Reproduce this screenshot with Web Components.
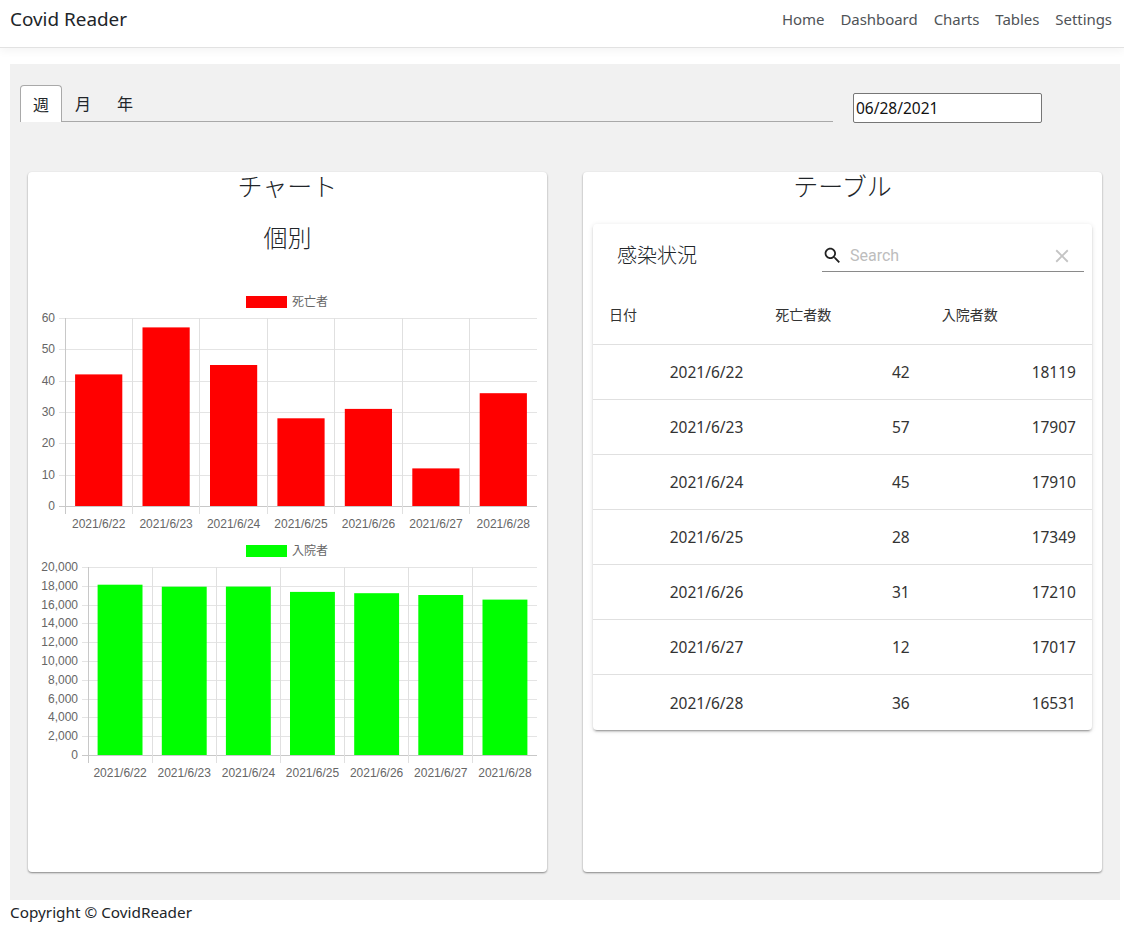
<!DOCTYPE html>
<html lang="ja">
<head>
<meta charset="utf-8">
<title>Covid Reader</title>
<style>
  html, body { margin: 0; padding: 0; background: #fff; }
  body {
    font-family: "Noto Sans", "Noto Sans CJK JP", sans-serif;
    color: #212529;
  }
</style>
</head>
<body>
<app-nav brand="Covid Reader"></app-nav>
<app-main>
  <tab-bar slot="tabs"></tab-bar>
  <date-field slot="date" value="06/28/2021"></date-field>
  <title-card slot="left" heading="チャート">
    <h-sub>個別</h-sub>
    <bar-chart label="死亡者" color="#ff0000" max="60" step="10" left="27" data="42,57,45,28,31,12,36"></bar-chart>
    <bar-chart label="入院者" color="#00ff00" max="20000" step="2000" left="50" data="18119,17907,17910,17349,17210,17017,16531"></bar-chart>
  </title-card>
  <title-card slot="right" heading="テーブル">
    <covid-table></covid-table>
  </title-card>
</app-main>
<app-footer>Copyright © CovidReader</app-footer>

<script>
const DAYS = ['2021/6/22', '2021/6/23', '2021/6/24', '2021/6/25', '2021/6/26', '2021/6/27', '2021/6/28'];
const DEATHS = [42, 57, 45, 28, 31, 12, 36];
const HOSPITAL = [18119, 17907, 17910, 17349, 17210, 17017, 16531];
const SANS = '"Noto Sans", "Noto Sans CJK JP", sans-serif';

class AppNav extends HTMLElement {
  constructor() {
    super();
    this.attachShadow({ mode: 'open' });
  }
  connectedCallback() {
    this.shadowRoot.innerHTML = `
    <style>
      :host {
        display: flex;
        align-items: center;
        justify-content: space-between;
        height: 38px;
        padding: 0 12px 9px 10px;
        background: #fff;
        border-bottom: 1px solid #e2e2e2;
        box-shadow: 0 4px 8px rgba(0, 0, 0, 0.04);
        font-family: ${SANS};
      }
      .brand { font-size: 18.9px; color: #212529; }
      nav { display: flex; gap: 16px; font-size: 15px; letter-spacing: -0.05px; color: #4f5357; }
    </style>
    <span class="brand">${this.getAttribute('brand')}</span>
    <nav>
      <span>Home</span><span>Dashboard</span><span>Charts</span><span>Tables</span><span>Settings</span>
    </nav>`;
  }
}

class AppMain extends HTMLElement {
  constructor() {
    super();
    this.attachShadow({ mode: 'open' });
    this.shadowRoot.innerHTML = `
    <style>
      :host {
        display: block;
        margin: 16px 4px 0 10px;
        padding: 21px 0 28px;
        background: #f1f1f1;
      }
      .toolbar {
        display: flex;
        padding-left: 10px;
        height: 37px;
      }
      .tabs { width: 813px; }
      .date { margin: 8px 0 0 20px; }
      .cards {
        display: grid;
        grid-template-columns: 519px 519px;
        gap: 36px;
        margin: 50px 18px 0;
      }
    </style>
    <div class="toolbar">
      <div class="tabs"><slot name="tabs"></slot></div>
      <div class="date"><slot name="date"></slot></div>
    </div>
    <div class="cards">
      <slot name="left"></slot>
      <slot name="right"></slot>
    </div>`;
  }
}

class TabBar extends HTMLElement {
  constructor() {
    super();
    this.attachShadow({ mode: 'open' });
    this.shadowRoot.innerHTML = `
    <style>
      :host {
        display: flex;
        height: 37px;
        box-sizing: border-box;
        border-bottom: 1px solid #a9a9a9;
        font-size: 16px;
        color: #212529;
      }
      span {
        box-sizing: border-box;
        width: 42px;
        height: 37px;
        line-height: 36px;
        text-align: center;
        font-family: "Noto Sans CJK JP", sans-serif;
      }
      .active {
        background: #fff;
        border: 1px solid #a9a9a9;
        border-bottom: 0;
        border-radius: 4px 4px 0 0;
      }
    </style>
    <span class="active">週</span><span>月</span><span>年</span>`;
  }
}

class DateField extends HTMLElement {
  constructor() {
    super();
    this.attachShadow({ mode: 'open' });
  }
  connectedCallback() {
    this.shadowRoot.innerHTML = `
    <style>
      :host {
        display: block;
        box-sizing: border-box;
        width: 189px;
        height: 30px;
        padding-left: 2px;
        line-height: 29px;
        background: #fff;
        border: 1px solid #767676;
        border-radius: 2px;
        font-size: 15.5px;
        color: #111;
      }
    </style>
    ${this.getAttribute('value')}`;
  }
}

class TitleCard extends HTMLElement {
  constructor() {
    super();
    this.attachShadow({ mode: 'open' });
  }
  connectedCallback() {
    this.shadowRoot.innerHTML = `
    <style>
      :host {
        display: flex;
        flex-direction: column;
        box-sizing: border-box;
        height: 700px;
        padding: 0 10px;
        background: #fff;
        border-radius: 4px;
        box-shadow: 0 1px 2px rgba(0, 0, 0, 0.45);
      }
      h2 {
        margin: 0;
        height: 30px;
        line-height: 26px;
        font-size: 25px;
        font-weight: 300;
        text-align: center;
        font-family: "Noto Sans CJK JP", sans-serif;
        color: #212529;
      }
    </style>
    <h2>${this.getAttribute('heading')}</h2>
    <slot></slot>`;
  }
}

class HSub extends HTMLElement {
  constructor() {
    super();
    this.attachShadow({ mode: 'open' });
    this.shadowRoot.innerHTML = `
    <style>
      :host {
        display: block;
        margin-top: 19px;
        height: 69px;
        line-height: 32px;
        font-size: 24px;
        font-weight: 300;
        text-align: center;
        font-family: "Noto Sans CJK JP", sans-serif;
        color: #212529;
      }
    </style>
    <slot></slot>`;
  }
}

// draws one chart.js style bar chart, the plot is 188px high and ends at the card padding
class BarChart extends HTMLElement {
  constructor() {
    super();
    this.attachShadow({ mode: 'open' });
  }
  connectedCallback() {
    const data = this.getAttribute('data').split(',').map(Number);
    const max = Number(this.getAttribute('max'));
    const step = Number(this.getAttribute('step'));
    const left = Number(this.getAttribute('left'));
    const color = this.getAttribute('color');
    const right = 499, top = 28, bottom = 216;
    const colW = (right - left) / data.length;
    const barW = colW * 0.7;
    let grid = '', bars = '', labels = '';

    for (let v = 0; v <= max; v += step) {
      const y = Math.round(bottom - (v / max) * (bottom - top)) + 0.5;
      const isBase = v === 0;
      grid += `<line x1="${left - 6}" x2="${right}" y1="${y}" y2="${y}" stroke="${isBase ? '#c8c8c8' : '#e4e4e4'}"/>`;
      labels += `<text x="${left - 10}" y="${y + 3.5}" text-anchor="end">${v.toLocaleString('en-US')}</text>`;
    }
    // no line on the right edge of the plot
    for (let i = 0; i < data.length; i++) {
      const x = Math.floor(left + i * colW) + 0.5;
      grid += `<line x1="${x}" x2="${x}" y1="${top}" y2="${bottom + 8}" stroke="${i === 0 ? '#c8c8c8' : '#e0e0e0'}"/>`;
    }
    data.forEach((v, i) => {
      const x = left + i * colW + (colW - barW) / 2;
      const h = (v / max) * (bottom - top);
      bars += `<rect x="${x.toFixed(1)}" y="${(bottom - h).toFixed(1)}" width="${barW.toFixed(1)}" height="${h.toFixed(1)}" fill="${color}"/>`;
      labels += `<text x="${(left + i * colW + colW / 2).toFixed(1)}" y="238" text-anchor="middle">${DAYS[i]}</text>`;
    });

    this.shadowRoot.innerHTML = `
    <style>
      :host { display: block; height: 249px; }
      svg { display: block; overflow: visible; }
      text { font: 12px "Liberation Sans", sans-serif; fill: #666; }
      .legend { font-family: "Noto Sans CJK JP", sans-serif; }
    </style>
    <svg width="499" height="249" viewBox="0 0 499 249">
      <rect x="208" y="6" width="41" height="12" fill="${color}"/>
      <text class="legend" x="254" y="16">${this.getAttribute('label')}</text>
      ${grid}${bars}${labels}
    </svg>`;
  }
}

class SearchBox extends HTMLElement {
  constructor() {
    super();
    this.attachShadow({ mode: 'open' });
    this.shadowRoot.innerHTML = `
    <style>
      :host {
        display: flex;
        align-items: center;
        box-sizing: border-box;
        width: 262px;
        height: 32px;
        border-bottom: 1px solid #8a8a8a;
      }
      svg { display: block; flex: none; }
      .ph {
        flex: 1;
        margin-left: 7px;
        font: 16px Roboto, sans-serif;
        color: #bdbdbd;
      }
      .clear { margin-right: 11px; }
    </style>
    <svg width="21" height="21" viewBox="0 0 24 24" fill="#212121"><path d="M15.5 14h-.79l-.28-.27C15.41 12.59 16 11.11 16 9.5 16 5.91 13.09 3 9.5 3S3 5.91 3 9.5 5.91 16 9.5 16c1.61 0 3.09-.59 4.23-1.57l.27.28v.79l5 4.99L20.49 19l-4.99-5zm-6 0C7.01 14 5 11.99 5 9.5S7.01 5 9.5 5 14 7.01 14 9.5 11.99 14 9.5 14z"/></svg>
    <span class="ph">Search</span>
    <svg class="clear" width="22" height="22" viewBox="0 0 24 24" fill="#c4c4c4"><path d="M19 6.41L17.59 5 12 10.59 6.41 5 5 6.41 10.59 12 5 17.59 6.41 19 12 13.41 17.59 19 19 17.59 13.41 12z"/></svg>`;
  }
}

class CovidTable extends HTMLElement {
  constructor() {
    super();
    this.attachShadow({ mode: 'open' });
    const rows = DAYS.map((d, i) => `
      <div class="row"><span>${d}</span><span>${DEATHS[i]}</span><span>${HOSPITAL[i]}</span></div>`).join('');
    this.shadowRoot.innerHTML = `
    <style>
      :host {
        display: block;
        margin-top: 22px;
        background: #fff;
        border-radius: 4px;
        box-shadow: 0 3px 1px -2px rgba(0,0,0,.2), 0 2px 2px 0 rgba(0,0,0,.14), 0 1px 5px 0 rgba(0,0,0,.12);
      }
      .bar {
        display: flex;
        align-items: flex-end;
        justify-content: space-between;
        height: 48px;
        padding: 0 8px 0 24px;
      }
      .title {
        align-self: center;
        padding-top: 12px;
        font: 300 20px "Noto Sans CJK JP", sans-serif;
        color: #212529;
      }
      .head, .row {
        display: grid;
        grid-template-columns: 1fr 1fr 1fr;
      }
      .head {
        height: 73px;
        box-sizing: border-box;
        padding-top: 12px;
        border-bottom: 1px solid #e0e0e0;
        align-items: center;
        font: 14px "Noto Sans CJK JP", sans-serif;
        color: #333;
      }
      .head span { padding-left: 16px; }
      .row {
        height: 55px;
        box-sizing: border-box;
        align-items: center;
        border-bottom: 1px solid #e0e0e0;
        font-size: 15.5px;
        color: #333;
      }
      .row:last-child { border-bottom: 0; }
      .row span { padding-right: 16px; text-align: right; }
    </style>
    <div class="bar">
      <span class="title">感染状況</span>
      <search-box></search-box>
    </div>
    <div class="head"><span>日付</span><span>死亡者数</span><span>入院者数</span></div>
    ${rows}`;
  }
}

class AppFooter extends HTMLElement {
  constructor() {
    super();
    this.attachShadow({ mode: 'open' });
    this.shadowRoot.innerHTML = `
    <style>
      :host {
        display: block;
        height: 25px;
        line-height: 25px;
        padding-left: 10px;
        font-size: 15.3px;
        color: #212529;
      }
    </style>
    <slot></slot>`;
  }
}

customElements.define('app-nav', AppNav);
customElements.define('app-main', AppMain);
customElements.define('tab-bar', TabBar);
customElements.define('date-field', DateField);
customElements.define('title-card', TitleCard);
customElements.define('h-sub', HSub);
customElements.define('bar-chart', BarChart);
customElements.define('search-box', SearchBox);
customElements.define('covid-table', CovidTable);
customElements.define('app-footer', AppFooter);
</script>
</body>
</html>
